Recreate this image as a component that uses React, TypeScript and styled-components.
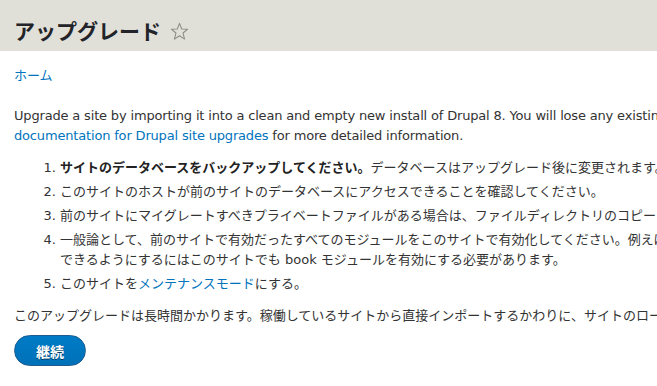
import React from "react";
import styled, { createGlobalStyle } from "styled-components";

const GlobalStyle = createGlobalStyle`
  html, body {
    margin: 0;
    padding: 0;
    overflow: hidden;
    background: #ffffff;
  }
  body {
    font-family: "DejaVu Sans", "Noto Sans CJK JP", sans-serif;
    font-size: 13px;
    color: #333333;
  }
`;

const Page = styled.div`
  width: max-content;
  min-width: 100%;
`;

const Header = styled.header`
  display: flex;
  align-items: center;
  gap: 9px;
  height: 51px;
  box-sizing: border-box;
  padding: 18px 14px 8px;
  background: #e0e0d8;
`;

const Title = styled.h1`
  margin: 0;
  font-family: "Noto Sans CJK JP", sans-serif;
  font-size: 21px;
  line-height: 25px;
  font-weight: 700;
  color: #232429;
`;

const StarIcon = styled.svg`
  width: 19px;
  height: 19px;
  flex: none;
  margin-top: 1px;
`;

const Content = styled.main`
  width: 1118px;
  padding: 15px 14px 0;
`;

const Breadcrumb = styled.nav`
  line-height: 20px;
`;

const Link = styled.a`
  color: #0074bd;
  text-decoration: none;
`;

const Paragraph = styled.p<{ $top: number; $latin?: boolean }>`
  margin: ${(p) => p.$top}px 0 0;
  line-height: 20px;
  letter-spacing: ${(p) => (p.$latin ? "-0.17px" : "0")};
`;

const Steps = styled.ol`
  margin: 12px 0;
  padding-left: 46px;
`;

const Step = styled.li`
  line-height: 20px;
  margin: 0 0 4px;
`;

const Strong = styled.strong`
  font-weight: 700;
  color: #222222;
`;

const Actions = styled.div`
  margin-top: 9px;
  display: flex;
`;

const Button = styled.button`
  height: 31px;
  box-sizing: border-box;
  padding: 0 21px;
  border: 1px solid #1e5c90;
  border-radius: 20em;
  background: linear-gradient(to bottom, #007bc6, #0071b8);
  color: #ffffff;
  font-family: "Noto Sans CJK JP", sans-serif;
  font-size: 14px;
  font-weight: 700;
  text-shadow: 0 1px rgba(0, 0, 0, 0.5);
  cursor: pointer;
`;

const Star = () => (
  <StarIcon viewBox="0 0 20 20" aria-hidden="true">
    <path
      d="M10 1.4 L12.35 7.35 L18.6 7.6 L13.75 11.6 L15.35 18 L10 14.45 L4.65 18 L6.25 11.6 L1.4 7.6 L7.65 7.35 Z"
      fill="none"
      stroke="#8c8c86"
      strokeWidth="1.1"
      strokeLinejoin="round"
    />
  </StarIcon>
);

export default function App() {
  return (
    <Page>
      <GlobalStyle />
      <Header>
        <Title>アップグレード</Title>
        <Star />
      </Header>
      <Content>
        <Breadcrumb>
          <Link href="#">ホーム</Link>
        </Breadcrumb>
        <Paragraph $top={20} $latin>
          Upgrade a site by importing it into a clean and empty new install of Drupal 8. You will lose any existing
          configuration once you import your site into it. See the online{" "}
          <Link href="#">documentation for Drupal site upgrades</Link> for more detailed information.
        </Paragraph>
        <Steps>
          <Step>
            <Strong>サイトのデータベースをバックアップしてください。</Strong>
            データベースはアップグレード後に変更されます。元に戻すことはできません。
          </Step>
          <Step>このサイトのホストが前のサイトのデータベースにアクセスできることを確認してください。</Step>
          <Step>
            前のサイトにマイグレートすべきプライベートファイルがある場合は、ファイルディレクトリのコピーをこのサイトからアクセスできる場所に置いてください。
          </Step>
          <Step>
            一般論として、前のサイトで有効だったすべてのモジュールをこのサイトで有効化してください。例えば、前のサイトでブック機能を使っていた場合、そのデータをこのサイトで利用できるようにするにはこのサイトでも book モジュールを有効にする必要があります。
          </Step>
          <Step>
            このサイトを<Link href="#">メンテナンスモード</Link>にする。
          </Step>
        </Steps>
        <Paragraph $top={0}>
          このアップグレードは長時間かかります。稼働しているサイトから直接インポートするかわりに、サイトのローカルコピーからインポートすることをお勧めします。
        </Paragraph>
        <Actions>
          <Button type="button">継続</Button>
        </Actions>
      </Content>
    </Page>
  );
}
